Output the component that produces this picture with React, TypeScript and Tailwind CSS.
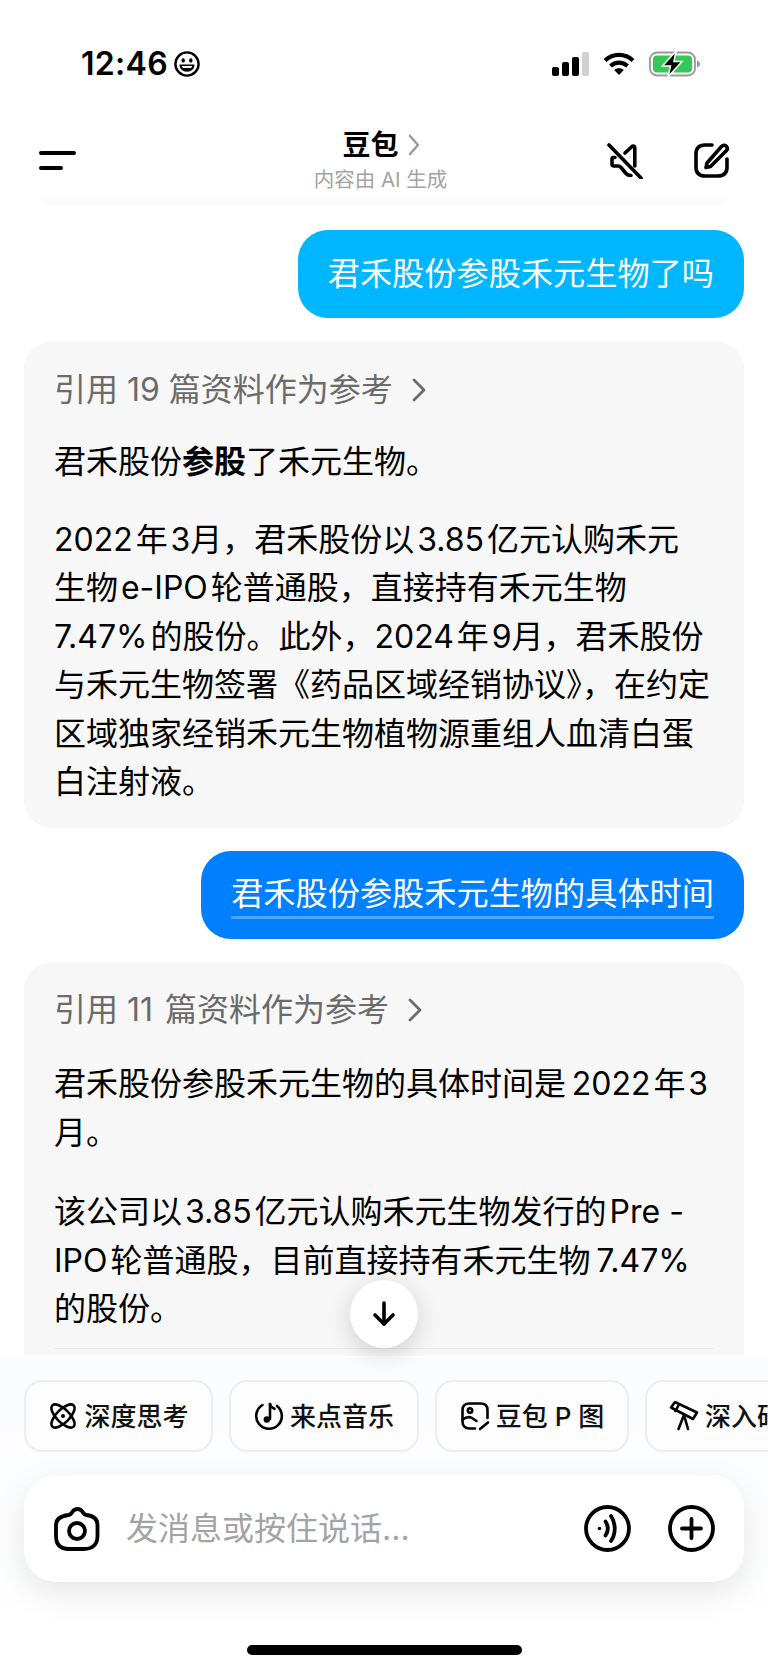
import type { ReactNode } from 'react'

const FONT = "font-['Inter','Noto_Sans_CJK_SC','Noto_Sans',sans-serif]"

function Smile() {
  return (
    <svg width="26" height="26" viewBox="0 0 26 26" fill="none" stroke="#000" strokeWidth="2.400">
      <circle cx="13" cy="13" r="11.600" />
      <ellipse cx="9.200" cy="9.400" rx="1.700" ry="2.200" fill="#000" stroke="none" />
      <ellipse cx="16.800" cy="9.400" rx="1.700" ry="2.200" fill="#000" stroke="none" />
      <path d="M5.500 13.500h15c0 4.500-3.200 7.200-7.500 7.200s-7.500-2.700-7.500-7.200z" fill="#000" stroke="none" />
      <path d="M7.800 15h10.400c-.3.900-.8 1.500-1.400 2.100H9.200c-.6-.6-1.100-1.200-1.400-2.100z" fill="#fff" stroke="none" />
    </svg>
  )
}

function StatusIcons() {
  return (
    <div className="flex items-center gap-[14px] pb-[3px]">
      <svg width="37" height="24" viewBox="0 0 37 24">
        <rect x="0" y="15" width="7" height="9" rx="2" fill="#000" />
        <rect x="10" y="10" width="7" height="14" rx="2" fill="#000" />
        <rect x="20" y="5" width="7" height="19" rx="2" fill="#000" />
        <rect x="30" y="0" width="7" height="24" rx="2" fill="#cfcfcf" />
      </svg>
      <svg width="32" height="24" viewBox="0 0 32 24" fill="none" stroke="#000" strokeWidth="4.200">
        <path d="M2 8.500c8-7.400 20-7.400 28 0" />
        <path d="M7.500 14c5-4.400 12-4.400 17 0" />
        <path d="M16 23l-4.800-5c2.800-2.300 6.800-2.300 9.600 0z" fill="#000" stroke="none" />
      </svg>
      <svg width="51" height="26" viewBox="0 0 51 26">
        <rect x="1" y="1.500" width="45" height="23" rx="7" fill="none" stroke="#9a9a9a" strokeWidth="1.800" />
        <rect x="4" y="4.500" width="39" height="17" rx="4" fill="#34c759" />
        <path d="M48 9.500c2 .6 3 2 3 3.500s-1 2.900-3 3.500z" fill="#9a9a9a" />
        <path d="M27 0L13.500 15h8L19 26 33 10.500h-8z" fill="#000" stroke="#fff" strokeWidth="1.500" />
      </svg>
    </div>
  )
}

function NavBar() {
  return (
    <div className="grid h-[96px] grid-cols-[1fr_auto_1fr] items-center pl-[39px] pr-[38px] pt-[24px]">
      <div className="flex flex-col gap-[11px]">
        <div className="h-1 w-[37px] rounded-full bg-black" />
        <div className="h-1 w-[24px] rounded-full bg-black" />
      </div>
      <div className="flex flex-col items-center pr-[8px]">
        <div className="flex items-center gap-[8px] pl-[2px] text-[28px] leading-[36px] font-semibold text-black">
          豆包
          <svg width="14" height="24" viewBox="0 0 14 24" fill="none" stroke="#9b9b9b" strokeWidth="2.600" strokeLinecap="round" strokeLinejoin="round">
            <path d="M3 3l8 9-8 9" />
          </svg>
        </div>
        <div className="mt-[3px] text-[20.500px] leading-[28px] text-[#a3a3a3]">内容由 AI 生成</div>
      </div>
      <div className="flex items-center justify-end gap-[50px]">
        <svg width="37" height="37" viewBox="0 0 37 37" fill="none" stroke="#000" strokeWidth="3.600" strokeLinecap="round" strokeLinejoin="round">
          <path d="M3 3l32 33" />
          <path d="M19 11l7-6.500c1.200-1 2.800-.4 2.800 1.500v18" />
          <path d="M9 15.500H7.500c-.9 0-1.500.6-1.500 1.500v5c0 1.200.7 2 2 2h4c1.300 0 2.300.5 3 1.500l5 6c1.200 1.400 2.800 2 5 2" />
        </svg>
        <svg width="37" height="37" viewBox="0 0 37 37" fill="none" stroke="#000" strokeWidth="3.600" strokeLinecap="round" strokeLinejoin="round">
          <path d="M19 3h-7C6 3 3 6 3 12v13c0 6 3 9 9 9h13c6 0 9-3 9-9v-8" />
          <path d="M14 21l-1 4.500 4.500-1L33 9c1.600-1.600 1.600-3.500.3-4.800s-3.200-1.300-4.800.3z" />
        </svg>
      </div>
    </div>
  )
}

function UserBubble({ color, underline, children }: { color: string; underline?: boolean; children: ReactNode }) {
  return (
    <div className="flex justify-end">
      <div className={`flex h-[88px] items-center rounded-[30px] px-[30px] text-[32.200px] text-white ${color}`}>
        <span className={`leading-[44px] ${underline ? 'border-b-[3px] border-white/30' : ''}`}>{children}</span>
      </div>
    </div>
  )
}

function SourceLink({ children }: { children: ReactNode }) {
  return (
    <div className="flex h-[44px] items-center gap-[18px] text-[32px] text-[#6b6b6b]">
      {children}
      <svg width="16" height="26" viewBox="0 0 16 26" fill="none" stroke="#6b6b6b" strokeWidth="2.800" strokeLinecap="round" strokeLinejoin="round">
        <path d="M3 3l10 10L3 23" />
      </svg>
    </div>
  )
}

function Para({ lines }: { lines: ReactNode[] }) {
  return (
    <div className="text-[32px] leading-[48.500px] whitespace-nowrap text-black">
      {lines.map((line, i) => (
        <div key={i}>{line}</div>
      ))}
    </div>
  )
}

function Chip({ icon, label, className }: { icon: ReactNode; label: ReactNode; className: string }) {
  return (
    <div className={`flex h-[72px] shrink-0 items-center justify-center gap-[6px] rounded-[18px] border-2 border-[#eceded] bg-[#fdfdfe] text-[26px] font-medium text-[#111] ${className}`}>
      {icon}
      <span className="whitespace-nowrap">{label}</span>
    </div>
  )
}

const chipIconProps = {
  width: 30,
  height: 30,
  viewBox: '0 0 30 30',
  fill: 'none',
  stroke: '#000',
  strokeWidth: 2.600,
  strokeLinecap: 'round' as const,
  strokeLinejoin: 'round' as const,
}

export default function App() {
  return (
    <div className={`flex h-[1670px] w-[768px] flex-col overflow-hidden bg-white ${FONT}`}>
      {/* status bar */}
      <div className="flex h-[100px] items-end justify-between pb-[20px] pl-[81px] pr-[68px]">
        <div className="flex items-center gap-[6px]">
          <span className="text-[32px] leading-[32px] font-semibold tracking-[0.3px] text-black">12:46</span>
          <Smile />
        </div>
        <StatusIcons />
      </div>

      <NavBar />

      {/* message list */}
      <div className="relative z-10 h-[1161px]">
        <div className="mx-[38px] h-[10px] rounded-b-[16px] bg-gradient-to-b from-white to-[#f9f9f9]" />
        <div className="flex flex-col px-[24px] pt-[24px]">
          <UserBubble color="bg-[#00b7ff]">君禾股份参股禾元生物了吗</UserBubble>

          <div className="mt-[23px] h-[487px] rounded-[28px] bg-[#f7f7f7] px-[30px] pt-[27px]">
            <SourceLink>引用 19 篇资料作为参考</SourceLink>
            <div className="mt-[26px]">
              <Para lines={[<>君禾股份<b className="font-semibold">参股</b>了禾元生物。</>]} />
            </div>
            <div className="mt-[29px]">
              <Para
                lines={[
                  '2022\u200a年\u200a3月，君禾股份以\u200a3.85\u200a亿元认购禾元',
                  '生物\u200ae-IPO\u200a轮普通股，直接持有禾元生物',
                  '7.47%\u200a的股份。此外，2024\u200a年\u200a9月，君禾股份',
                  '与禾元生物签署《药品区域经销协议》，在约定',
                  '区域独家经销禾元生物植物源重组人血清白蛋',
                  '白注射液。',
                ]}
              />
            </div>
          </div>

          <div className="mt-[23px]">
            <UserBubble color="bg-[#0080ff]" underline>君禾股份参股禾元生物的具体时间</UserBubble>
          </div>

          <div className="mt-[23px] h-[394px] rounded-t-[28px] bg-[#f7f7f7] px-[30px] pt-[26px]">
            <SourceLink>引用 11&#8202; 篇资料作为参考</SourceLink>
            <div className="mt-[28px]">
              <Para lines={['君禾股份参股禾元生物的具体时间是\u20092022\u200a年\u200a3', '月。']} />
            </div>
            <div className="mt-[31px]">
              <Para
                lines={[
                  '该公司以\u200a3.85\u200a亿元认购禾元生物发行的\u200aPre -',
                  'IPO\u200a轮普通股，目前直接持有禾元生物\u20097.47%',
                  '的股份。',
                ]}
              />
            </div>
            <div className="mt-[14px] h-px bg-[#e9e9e9]" />
          </div>
        </div>

        {/* jump to latest */}
        <div className="absolute left-[350px] top-[1084px] flex h-[68px] w-[68px] items-center justify-center rounded-full bg-white shadow-[0_6px_24px_rgba(0,0,0,0.16)]">
          <svg width="26" height="28" viewBox="0 0 26 28" fill="none" stroke="#000" strokeWidth="3.600" strokeLinecap="round" strokeLinejoin="round">
            <path d="M13 3v21" />
            <path d="M4 15l9 9 9-9" />
          </svg>
        </div>
      </div>

      {/* quick actions and composer */}
      <div className="flex flex-1 flex-col bg-gradient-to-b from-[#fbfcfe] to-white">
        <div className="flex gap-[16px] overflow-hidden pl-[24px] pt-[23px]">
          <Chip
            className="w-[189px]"
            label="深度思考"
            icon={
              <svg {...chipIconProps}>
                <ellipse cx="15" cy="15" rx="6.500" ry="15" transform="rotate(45 15 15)" />
                <ellipse cx="15" cy="15" rx="6.500" ry="15" transform="rotate(-45 15 15)" />
                <circle cx="15" cy="15" r="2" fill="#000" stroke="none" />
              </svg>
            }
          />
          <Chip
            className="w-[190px]"
            label="来点音乐"
            icon={
              <svg {...chipIconProps}>
                <path d="M8.500 4A12.800 12.800 0 1 0 23 5" />
                <path d="M16 3v15" />
                <circle cx="12.800" cy="18.500" r="3.200" fill="#000" stroke="none" />
                <path d="M16 3c.6 2.600 2 4 4.500 4.800" />
              </svg>
            }
          />
          <Chip
            className="w-[194px]"
            label="豆包 P 图"
            icon={
              <svg {...chipIconProps}>
                <path d="M15 27.500H9.500C5 27.500 2.500 25 2.500 20.500V9C2.500 5 5 2.500 9.500 2.500h11c4.500 0 7 2.500 7 6.500v8" />
                <circle cx="10" cy="9.500" r="2.200" />
                <path d="M2.500 18.500c3.500-2.500 7-3 9.500-1.500l4.500 3" />
                <path d="M20 28l8-6.500" />
              </svg>
            }
          />
          <Chip
            className="w-[190px] !justify-start pl-[22px]"
            label="深入研究"
            icon={
              <svg {...chipIconProps}>
                <path d="M2 6.500L6 1l22 10.500-4 6.500z" />
                <path d="M10 3.500L6.500 10" />
                <path d="M15 14l-5.500 14M15 14l4 14" />
              </svg>
            }
          />
        </div>

        <div className="mx-[24px] mt-[23px] flex h-[107px] items-center rounded-[32px] bg-white pl-[30px] pr-[29px] shadow-[0_10px_32px_rgba(0,0,0,0.1)]">
          <svg width="46" height="46" viewBox="0 0 46 46" fill="none" stroke="#000" strokeWidth="3.800" strokeLinecap="round" strokeLinejoin="round">
            <path d="M14.500 9c2.500-.4 3-1.700 4-3.200C20 3.500 21 3 23.500 3s3.500.5 5 2.800c1 1.500 1.500 2.800 4 3.200 6.500.8 11 3.500 11 10v11c0 8.500-5 13-13.500 13H15C6.500 43 2 38.500 2 30V19c0-6.500 6-9.200 12.500-10z" />
            <circle cx="23" cy="25" r="8" />
          </svg>
          <div className="ml-[26px] flex-1 text-[32px] text-[#a3a3a3]">发消息或按住说话...</div>
          <div className="flex items-center gap-[37px]">
            <svg width="47" height="47" viewBox="0 0 47 47" fill="none" stroke="#000" strokeWidth="3.800" strokeLinecap="round">
              <circle cx="23.500" cy="23.500" r="21.500" />
              <circle cx="15.500" cy="23.500" r="1.800" fill="#000" stroke="none" />
              <path d="M21.500 16.500c3 4.500 3 9.500 0 14" />
              <path d="M27 11c5 7.500 5 17.500 0 25" />
            </svg>
            <svg width="47" height="47" viewBox="0 0 47 47" fill="none" stroke="#000" strokeWidth="3.800" strokeLinecap="round">
              <circle cx="23.500" cy="23.500" r="21.500" />
              <path d="M23.500 14v19M14 23.500h19" />
            </svg>
          </div>
        </div>

        {/* home indicator */}
        <div className="mx-auto mt-[63px] h-[10px] w-[275px] rounded-full bg-black" />
      </div>
    </div>
  )
}
